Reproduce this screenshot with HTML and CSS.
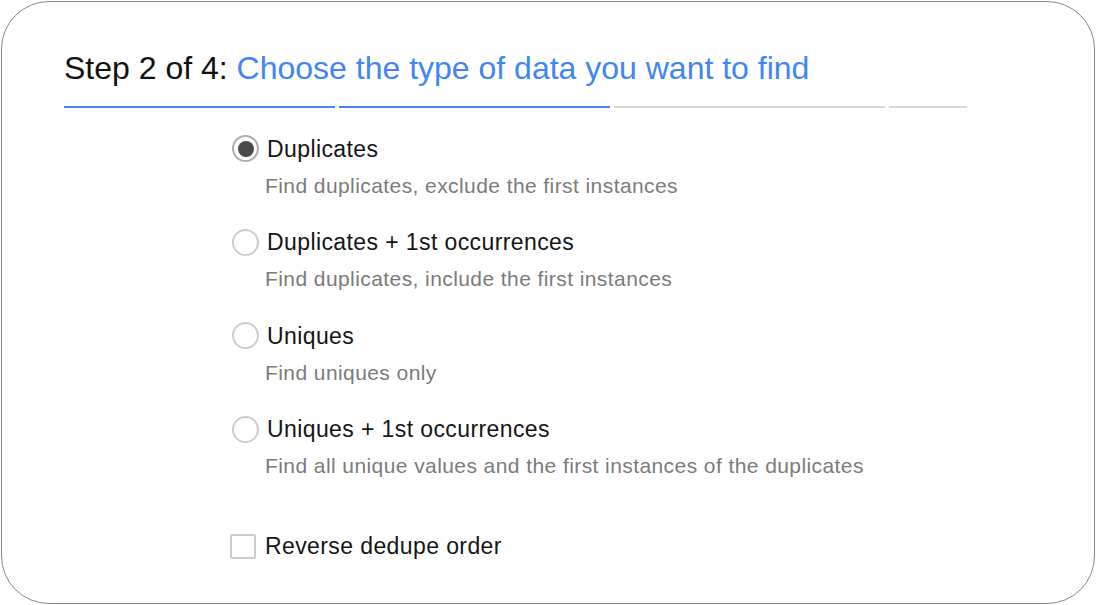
FILE: index.html
```html
<!DOCTYPE html>
<html lang="en">
<head>
<meta charset="utf-8">
<title>Step 2 of 4</title>
<link rel="stylesheet" href="styles.css">
</head>
<body>
<div class="card">
  <h1 class="title">Step 2 of 4: <span class="title-accent">Choose the type of data you want to find</span></h1>
  <div class="progress">
    <div class="seg seg-done"></div>
    <div class="seg seg-done"></div>
    <div class="seg"></div>
    <div class="seg seg-short"></div>
  </div>
  <div class="options">
    <div class="option">
      <div class="row"><span class="radio radio-on"><span class="dot"></span></span><span class="label">Duplicates</span></div>
      <div class="desc">Find duplicates, exclude the first instances</div>
    </div>
    <div class="option">
      <div class="row"><span class="radio"></span><span class="label">Duplicates + 1st occurrences</span></div>
      <div class="desc">Find duplicates, include the first instances</div>
    </div>
    <div class="option">
      <div class="row"><span class="radio"></span><span class="label">Uniques</span></div>
      <div class="desc">Find uniques only</div>
    </div>
    <div class="option">
      <div class="row"><span class="radio"></span><span class="label">Uniques + 1st occurrences</span></div>
      <div class="desc">Find all unique values and the first instances of the duplicates</div>
    </div>
    <div class="check-row"><span class="checkbox"></span><span class="label">Reverse dedupe order</span></div>
  </div>
</div>
</body>
</html>
```
FILE: styles.css
```css
html, body {
  margin: 0;
  padding: 0;
  background: #ffffff;
}

body {
  font-family: "Liberation Sans", Arial, sans-serif;
  color: #1a1a1a;
}

.card {
  margin: 1px;
  width: 1094px;
  height: 603px;
  box-sizing: border-box;
  border: 1px solid #878787;
  border-radius: 48px;
  padding: 45.5px 0 0 62px;
  overflow: hidden;
}

.title {
  margin: 0 0 18.5px 0;
  font-size: 32px;
  line-height: 40px;
  font-weight: normal;
  letter-spacing: 0;
  color: #111111;
  white-space: nowrap;
}

.title-accent {
  color: #4285f4;
}

.progress {
  display: flex;
  gap: 4px;
}

.seg {
  width: 271px;
  height: 2px;
  background: #d9d9d9;
}

.seg-done {
  background: #4285f4;
}

.seg-short {
  width: 78px;
}

.options {
  margin-top: 26.7px;
  margin-left: 168px;
}

.option {
  margin-bottom: 29.5px;
}

.row {
  display: flex;
  align-items: center;
  gap: 8px;
  height: 28px;
}

.label {
  font-size: 23px;
  line-height: 28px;
  letter-spacing: 0.4px;
  color: #151515;
  white-space: nowrap;
}

.radio {
  width: 27px;
  height: 27px;
  box-sizing: border-box;
  border: 2px solid #cdcdcd;
  border-radius: 50%;
  display: flex;
  align-items: center;
  justify-content: center;
  flex: none;
}

.radio-on {
  border-color: #adadad;
}

.dot {
  width: 16px;
  height: 16px;
  border-radius: 50%;
  background: #4a4a4a;
}

.desc {
  margin-top: 10px;
  margin-left: 33px;
  font-size: 21px;
  line-height: 26px;
  letter-spacing: 0.42px;
  color: #7b7b7b;
  white-space: nowrap;
}

.check-row {
  display: flex;
  align-items: center;
  gap: 9px;
  height: 28px;
  margin-top: 53px;
  margin-left: -2px;
}

.checkbox {
  width: 26px;
  height: 25px;
  box-sizing: border-box;
  border: 2px solid #cbcbcb;
  border-radius: 2px;
  flex: none;
}
```
